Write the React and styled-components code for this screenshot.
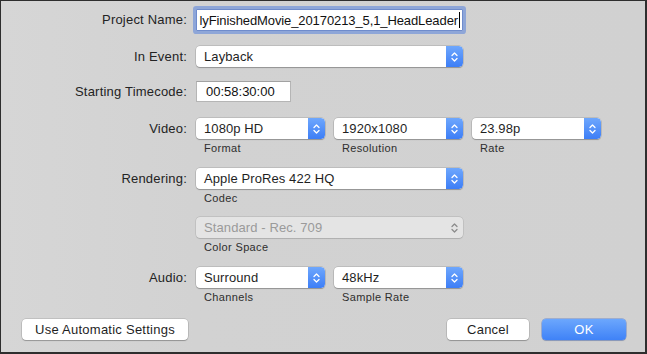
import React from "react";
import styled, { createGlobalStyle, css } from "styled-components";

const Global = createGlobalStyle`
  html, body { margin: 0; padding: 0; background: #2e2e2e; }
  body { width: 647px; height: 354px; overflow: hidden; font-family: "Liberation Sans", Arial, sans-serif; }
  * { box-sizing: border-box; }
`;

const Dialog = styled.div`
  margin: 1px 2px 0 1px;
  width: 644px;
  height: 351px;
  background: linear-gradient(90deg, #d6d6d6 0%, #d2d2d2 30%, #d1d1d1 100%);
  display: flex;
  flex-direction: column;
  padding-top: 7px;
  color: #232323;
  font-size: 13px;
`;

const Row = styled.div`
  display: flex;
  align-items: flex-start;
  gap: 9px;
  margin-top: ${(p) => p.$top || 0}px;
`;

const Label = styled.div`
  width: 186px;
  flex: none;
  text-align: right;
  letter-spacing: 0.2px;
  line-height: ${(p) => p.$h || 21}px;
  height: ${(p) => p.$h || 21}px;
  white-space: nowrap;
`;

const Field = styled.div`
  display: flex;
  flex-direction: column;
`;

const SubLabel = styled.div`
  font-size: 11px;
  line-height: 13px;
  letter-spacing: 0.35px;
  color: #2e2e2e;
  padding-left: 8px;
  margin-top: 3px;
`;

const Controls = styled.div`
  display: flex;
  gap: 9px;
`;

const PopupBox = styled.div`
  position: relative;
  width: ${(p) => p.$w}px;
  height: 21px;
  border-radius: 4px;
  display: flex;
  align-items: center;
  background: ${(p) => (p.$disabled ? "#e4e4e4" : "#ffffff")};
  box-shadow: ${(p) =>
    p.$disabled
      ? "0 0 0 0.5px rgba(0,0,0,0.14), 0 0.5px 1px rgba(0,0,0,0.1)"
      : "0 0 0 0.5px rgba(0,0,0,0.2), 0 1px 1px rgba(0,0,0,0.22)"};
  overflow: hidden;
`;

const PopupText = styled.span`
  flex: 1;
  padding-left: 8px;
  white-space: nowrap;
  line-height: 21px;
  letter-spacing: 0.1px;
  color: ${(p) => (p.$disabled ? "#9a9a9a" : "#1f1f1f")};
`;

const Stepper = styled.div`
  width: 17px;
  height: 100%;
  display: flex;
  align-items: center;
  justify-content: center;
  border-radius: 0 4px 4px 0;
  ${(p) =>
    p.$disabled
      ? css`background: transparent;`
      : css`background: linear-gradient(180deg, #6ea7fd 0%, #3d7ef6 100%);`}
`;

const Chevrons = ({ color }) => (
  <svg width="7" height="12" viewBox="0 0 7 12">
    <path
      d="M1 4.5 L3.5 2 L6 4.5 M1 7.5 L3.5 10 L6 7.5"
      fill="none"
      stroke={color}
      strokeWidth="1.3"
      strokeLinecap="round"
      strokeLinejoin="round"
    />
  </svg>
);

const Popup = ({ w, children, disabled }) => (
  <PopupBox $w={w} $disabled={disabled}>
    <PopupText $disabled={disabled}>{children}</PopupText>
    <Stepper $disabled={disabled}>
      <Chevrons color={disabled ? "#8c8c8c" : "#ffffff"} />
    </Stepper>
  </PopupBox>
);

const TextField = styled.div`
  width: ${(p) => p.$w}px;
  height: ${(p) => p.$h || 21}px;
  background: #fff;
  border: 1px solid #b5b5b5;
  border-top-color: #a2a2a2;
  display: flex;
  align-items: center;
  padding: 0 0 0 9px;
  overflow: hidden;
  white-space: nowrap;
  color: #111;
  ${(p) =>
    p.$focused &&
    css`
      padding: 0 2px 0 1px;
      border-color: #6f8ccc;
      box-shadow: 0 0 0 3px #8ea6d8;
      border-radius: 1px;
      overflow: visible;
    `}
`;

const Clip = styled.div`
  overflow: hidden;
  display: flex;
  justify-content: flex-end;
  align-items: center;
  width: 100%;
  height: 100%;
  letter-spacing: -0.1px;
`;

const Caret = styled.span`
  display: inline-block;
  width: 1px;
  height: 16px;
  background: #000;
  margin-left: 1px;
  flex: none;
`;

const Footer = styled.div`
  display: flex;
  align-items: center;
  margin-top: 15px;
  padding: 0 19px 0 21px;
`;

const Spacer = styled.div`
  flex: 1;
`;

const Button = styled.div`
  width: ${(p) => p.$w}px;
  height: 21px;
  border-radius: 4px;
  display: flex;
  align-items: center;
  justify-content: center;
  letter-spacing: 0.25px;
  margin-left: ${(p) => p.$ml || 0}px;
  ${(p) =>
    p.$primary
      ? css`
          background: linear-gradient(180deg, #6ca7fd 0%, #3f82f7 100%);
          color: #fff;
          box-shadow: 0 0 0 0.5px rgba(40, 90, 200, 0.6), 0 1px 1px rgba(0, 0, 0, 0.15);
        `
      : css`
          background: #fff;
          color: #1f1f1f;
          box-shadow: 0 0 0 0.5px rgba(0, 0, 0, 0.2), 0 1px 1px rgba(0, 0, 0, 0.22);
        `}
`;

export default function App() {
  return (
    <>
      <Global />
      <Dialog>
        <Row $top={1}>
          <Label $h={22}>Project Name:</Label>
          <TextField $w={267} $h={22} $focused>
            <Clip>
              <span>lyFinishedMovie_20170213_5,1_HeadLeader</span>
              <Caret />
            </Clip>
          </TextField>
        </Row>

        <Row $top={15}>
          <Label>In Event:</Label>
          <Popup w={267}>Layback</Popup>
        </Row>

        <Row $top={14}>
          <Label>Starting Timecode:</Label>
          <TextField $w={95}>00:58:30:00</TextField>
        </Row>

        <Row $top={16}>
          <Label>Video:</Label>
          <Controls>
            <Field>
              <Popup w={129}>1080p HD</Popup>
              <SubLabel>Format</SubLabel>
            </Field>
            <Field>
              <Popup w={129}>1920x1080</Popup>
              <SubLabel>Resolution</SubLabel>
            </Field>
            <Field>
              <Popup w={129}>23.98p</Popup>
              <SubLabel>Rate</SubLabel>
            </Field>
          </Controls>
        </Row>

        <Row $top={13}>
          <Label>Rendering:</Label>
          <Field>
            <Popup w={267}>Apple ProRes 422 HQ</Popup>
            <SubLabel>Codec</SubLabel>
          </Field>
        </Row>

        <Row $top={12}>
          <Label />
          <Field>
            <Popup w={267} disabled>
              Standard - Rec. 709
            </Popup>
            <SubLabel>Color Space</SubLabel>
          </Field>
        </Row>

        <Row $top={13}>
          <Label>Audio:</Label>
          <Controls>
            <Field>
              <Popup w={129}>Surround</Popup>
              <SubLabel>Channels</SubLabel>
            </Field>
            <Field>
              <Popup w={129}>48kHz</Popup>
              <SubLabel>Sample Rate</SubLabel>
            </Field>
          </Controls>
        </Row>

        <Footer>
          <Button $w={166}>Use Automatic Settings</Button>
          <Spacer />
          <Button $w={82}>Cancel</Button>
          <Button $w={84} $ml={13} $primary>
            OK
          </Button>
        </Footer>
      </Dialog>
    </>
  );
}
